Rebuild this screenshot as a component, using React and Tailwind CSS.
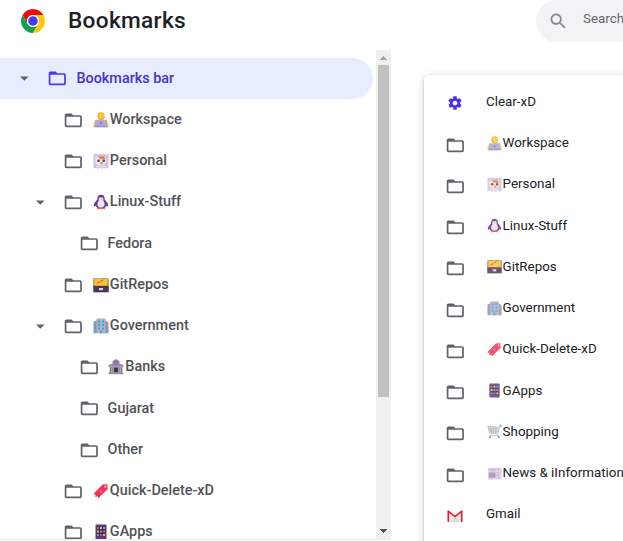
import React from 'react';

const FOLDER =
  'M20 6h-8l-2-2H4c-1.1 0-1.99.9-1.99 2L2 18c0 1.1.9 2 2 2h16c1.1 0 2-.9 2-2V8c0-1.1-.9-2-2-2zm0 12H4V8h16v10z';

function FolderIcon({ className = '' }) {
  return (
    <svg viewBox="0 0 24 24" className={`size-[20.6px] shrink-0 fill-current ${className}`}>
      <path d={FOLDER} />
    </svg>
  );
}

const EMOJI = {
  worker: (
    <>
      <path d="M.5 15v-2.500Q1 9 4 8.500h8q3 .5 3.500 4V15z" fill="#f8c63c" />
      <path d="M4.500 3Q5 .3 8 .3T11.600 3.500 10.500 7.300L10 9H6.300L6 7.500Q4.300 6 4.500 3z" fill="#f2b01b" />
      <path d="M5.500 2.500Q8 0 10.700 2.500L10 6 8 6.800 6.300 5.500z" fill="#ffca2b" />
      <path d="M2 7.800h12v6.700H2z" fill="#b7a5d8" />
      <path d="M1.500 13.700h13v1.600h-13z" fill="#9c8bbd" />
      <circle cx="8" cy="11" r=".9" fill="#7354aa" />
    </>
  ),
  owl: (
    <>
      <path d="M.5 1.500L3 .5l2 1.200L7 .5l2 1.200L11 .5l2 1.200 2.500-1v14L13 15.500l-2-.8-2 1-2-1-2 1-2-1-2.500.8z" fill="#cfc2e0" />
      <path d="M2.500 3.500L8 5l5-1.500.3 6L10 12.500H6L2.500 10z" fill="#efe5ec" />
      <path d="M5.500 3.200l5.500.3 1.800 2.500-3 .5-1.300-1L7 6.500z" fill="#f17d33" />
      <path d="M7.800 9l2.500.3L9 12 7.300 11z" fill="#f58b3c" />
      <circle cx="5.500" cy="7.800" r="1.300" fill="#604052" />
      <circle cx="10.800" cy="7.800" r="1.300" fill="#604052" />
      <path d="M3 12.500l1.500.8L6 12.500l2 1 2-1 1.500.8 1.500-.8v1.800H3z" fill="#e8e0f1" />
    </>
  ),
  penguin: (
    <>
      <path d="M8 .8C5.300.8 4.200 2.800 4.300 5.500L1.200 9.500c-1 2-.3 4.200 1.700 2.300.5 2 2 3 5.100 3s4.600-1 5.100-3c2 1.900 2.700-.3 1.700-2.300l-3.100-4C11.800 2.800 10.700.8 8 .8z" fill="#693a91" />
      <path d="M5.800 4Q7 2.500 8 3.800 9 2.500 10.300 4v2.700c2.700 3.500 1 6.800-2.300 6.800s-5-3.300-2.200-6.800z" fill="#eee6f2" />
      <path d="M7 4.700h2L8 6.200z" fill="#fb9e31" />
      <path d="M4.300 13.700H7v1.600H3.800zM9 13.700h2.700l.5 1.600H9z" fill="#f96e38" />
    </>
  ),
  box: (
    <>
      <path d="M.5 1.500h15V11H.5z" fill="#6b4a55" />
      <path d="M1.300 2h8l1-1h3l1.400 1.500V9.500H1.300z" fill="#ffc52a" />
      <path d="M9.500.8H13v1.500H9.500z" fill="#58c55c" />
      <path d="M4 6.200l3-1.200M7.500 4.200l2.500-1" stroke="#ed5940" strokeWidth="1.300" />
      <path d="M.3 8.800h15.400v6.500H.3z" fill="#4c345d" />
      <path d="M6 11h4v2.200H6z" fill="#dfd4ea" />
    </>
  ),
  office: (
    <>
      <path d="M1 3.500L4 2v13.300H.5V5zM12 2.500L15 4l.5 1.500v9.800H12z" fill="#9d91aa" />
      <path d="M3.500.5h9v14.800h-9z" fill="#b7acc0" />
      <path d="M5 2.500h2v2H5zM9 2.500h2v2H9zM5 6h2v2H5zM9 6h2v2H9zM5 9.500h2v2H5zM9 9.500h2v2H9zM7 12.500h2v2.800H7z" fill="#21aeea" />
      <path d="M1.300 5.500h1v8h-1zM13.500 5.500h1v8h-1z" fill="#64a6cb" />
    </>
  ),
  bank: (
    <>
      <path d="M8 0l3.500 2v2.500L15.500 6v2H.5V6l4-1.500V2z" fill="#9b8ba5" />
      <path d="M1.500 7.500h13v6h-13z" fill="#b9acc0" />
      <path d="M6 8.500h4v5H6z" fill="#40303f" />
      <path d="M2 8h1.200v5.500H2zM4.300 8h1v5.500h-1zM10.700 8h1v5.500h-1zM12.900 8h1.200v5.500h-1.200z" fill="#85758e" />
      <path d="M.8 13.200h14.400v2H.8z" fill="#9787a1" />
      <circle cx="8" cy="3.800" r="1.700" fill="#773fba" />
      <path d="M7.600 2.700h.8v2.300h-.8z" fill="#e0c2fa" />
    </>
  ),
  tag: (
    <>
      <path d="M9.500 1.500l4.500-.3.800 4.800-7.300 7-2 2.500-.9-2.300-2.300.8.200-2.300L.300 11z" fill="#f63156" />
      <path d="M8 6.900l1.500 1.500L8 9.900 6.500 8.400z" fill="#ff8298" />
      <circle cx="12.300" cy="3.700" r=".9" fill="#fff" />
      <path d="M12.300 3.700q0-3 3-3.200" fill="none" stroke="#dc9a69" strokeWidth=".8" />
    </>
  ),
  abacus: (
    <>
      <rect x="2.500" y=".5" width="11" height="15" rx="1" fill="#57398c" />
      <path d="M4 2.500h8v9.800H4z" fill="#3a2c5b" />
      <path d="M4 3h2v2H4zM10 6.500h2v2h-2zM7 10h2v2H7z" fill="#ed593d" />
      <path d="M7 3h2v2H7zM4 6.500h2v2H4zM10 10h2v2h-2z" fill="#f9b62f" />
      <path d="M10 3h2v2h-2zM7 6.500h2v2H7zM4 10h2v2H4z" fill="#4fa6e8" />
    </>
  ),
  cart: (
    <>
      <path d="M1 2.500l11.500 1L11 10H3z" fill="#e6e2e9" />
      <path d="M.7 2.500l11.800 1M1.500 5.200l10.500.3M2 7.700h9.500M4 3l.8 7M6.700 3l.3 7M9.500 3v7M1 2.500L3 10h8.500L13.700 1.500h1.500M11 10l1.300 2.300H3" fill="none" stroke="#b0aab6" strokeWidth=".9" />
      <path d="M13.300.8h2.300V3h-1.500z" fill="#68a9eb" />
      <circle cx="3" cy="14" r="1.200" fill="#4e9df2" />
      <circle cx="12.500" cy="14" r="1.200" fill="#4e9df2" />
    </>
  ),
  news: (
    <>
      <path d="M1 2h14.500v12.500H1z" fill="#d9cde6" />
      <path d="M2 3h8v2H2zM11 3h3.500v1H11z" fill="#bfb2cd" />
      <path d="M2 7h7v5.500H2z" fill="#9f91ac" />
      <path d="M10 7h4v1h-4zM10 9.300h4v1h-4zM10 11.600h4v1h-4z" fill="#bcb0c9" />
    </>
  ),
};

function Emoji({ name, className = '' }) {
  return (
    <svg viewBox="0 0 16 16" className={`shrink-0 ${className}`}>
      {EMOJI[name]}
    </svg>
  );
}

function Caret() {
  return (
    <svg viewBox="0 0 24 24" className="size-[20.6px] fill-[#5f6368]">
      <path d="M7 10l5 5 5-5z" />
    </svg>
  );
}

const TREE = [
  { label: 'Bookmarks bar', depth: 0, open: true },
  { label: 'Workspace', depth: 1, emoji: 'worker' },
  { label: 'Personal', depth: 1, emoji: 'owl' },
  { label: 'Linux-Stuff', depth: 1, emoji: 'penguin', open: true },
  { label: 'Fedora', depth: 2 },
  { label: 'GitRepos', depth: 1, emoji: 'box' },
  { label: 'Government', depth: 1, emoji: 'office', open: true },
  { label: 'Banks', depth: 2, emoji: 'bank' },
  { label: 'Gujarat', depth: 2 },
  { label: 'Other', depth: 2 },
  { label: 'Quick-Delete-xD', depth: 1, emoji: 'tag' },
  { label: 'GApps', depth: 1, emoji: 'abacus' },
];

const ITEMS = [
  { label: 'Clear-xD', icon: 'gear' },
  { label: 'Workspace', emoji: 'worker' },
  { label: 'Personal', emoji: 'owl' },
  { label: 'Linux-Stuff', emoji: 'penguin' },
  { label: 'GitRepos', emoji: 'box' },
  { label: 'Government', emoji: 'office' },
  { label: 'Quick-Delete-xD', emoji: 'tag' },
  { label: 'GApps', emoji: 'abacus' },
  { label: 'Shopping', emoji: 'cart' },
  { label: 'News & iInformation', emoji: 'news' },
  { label: 'Gmail', icon: 'gmail' },
];

const INDENT = ['pl-[14px]', 'pl-[29.7px]', 'pl-[45.2px]'];

function TreeRow({ label, depth, emoji, open }) {
  const active = depth === 0;
  return (
    <div
      className={`flex h-[41.25px] w-[373px] shrink-0 items-center ${INDENT[depth]} ${
        active ? 'rounded-r-full bg-[#e8ecff]' : ''
      }`}
    >
      <div className="w-[33.4px] shrink-0">{open && <Caret />}</div>
      <FolderIcon className={active ? 'text-[#4b38ee]' : 'text-[#5f6368]'} />
      <div
        className={`flex items-center whitespace-nowrap text-[14.42px] font-medium leading-5 ${
          emoji ? 'ml-[9px]' : 'ml-[8.4px]'
        } ${active ? 'text-[#4534c8]' : 'text-[#515256]'}`}
      >
        {emoji && <Emoji name={emoji} className="mr-[1.2px] size-4" />}
        <span>{label}</span>
      </div>
    </div>
  );
}

function Gear() {
  return (
    <svg viewBox="0 0 24 24" className="size-4 fill-[#4733ef]">
      <path d="M19.43 12.98c.04-.32.07-.64.07-.98s-.03-.66-.07-.98l2.11-1.65c.19-.15.24-.42.12-.64l-2-3.46c-.12-.22-.39-.3-.61-.22l-2.49 1c-.52-.4-1.08-.73-1.69-.98l-.38-2.65C14.46 2.18 14.25 2 14 2h-4c-.25 0-.46.18-.49.42l-.38 2.65c-.61.25-1.17.59-1.69.98l-2.49-1c-.23-.09-.49 0-.61.22l-2 3.46c-.13.22-.07.49.12.64l2.11 1.65c-.04.32-.07.65-.07.98s.03.66.07.98l-2.11 1.65c-.19.15-.24.42-.12.64l2 3.46c.12.22.39.3.61.22l2.49-1c.52.4 1.08.73 1.69.98l.38 2.65c.03.24.24.42.49.42h4c.25 0 .46-.18.49-.42l.38-2.65c.61-.25 1.17-.59 1.69-.98l2.49 1c.23.09.49 0 .61-.22l2-3.46c.12-.22.07-.49-.12-.64l-2.11-1.65zM12 15.500c-1.930 0-3.500-1.570-3.500-3.500s1.570-3.500 3.500-3.500 3.500 1.570 3.500 3.500-1.570 3.500-3.500 3.500z" />
    </svg>
  );
}

function Gmail() {
  return (
    <svg viewBox="0 0 16 16" className="size-4">
      <path d="M2 3.500l6 5 6-5V14H2z" fill="#ededed" />
      <path d="M3 14l5-5 5 5z" fill="#dadada" />
      <path d="M1.300 14V3.200L8 8.700l6.700-5.500V14" fill="none" stroke="#e5272b" strokeWidth="1.700" strokeLinejoin="round" />
    </svg>
  );
}

function ItemRow({ label, emoji, icon }) {
  return (
    <div className="flex h-[41.25px] shrink-0 items-center pl-[20.6px]">
      <div className={`flex w-[20.6px] shrink-0 justify-center ${icon ? 'pb-[1px]' : ''}`}>
        {icon === 'gear' && <Gear />}
        {icon === 'gmail' && <Gmail />}
        {!icon && <FolderIcon className="text-[#5f6368]" />}
      </div>
      <div className="ml-[20.8px] flex items-center whitespace-nowrap pb-[3.4px] text-[13.39px] leading-5 text-[#202124]">
        {emoji && <Emoji name={emoji} className="ml-[0.6px] mr-[1px] size-[15px] opacity-85" />}
        <span>{label}</span>
      </div>
    </div>
  );
}

function ChromeLogo() {
  return (
    <svg viewBox="0 0 48 48" className="size-6 shrink-0">
      <circle cx="24" cy="24" r="24" fill="#fff" />
      <path d="M3.220 12A24 24 0 0 1 44.780 12H24a12 12 0 0 0-10.390 18z" fill="#ed0b0b" />
      <path d="M3.220 12A24 24 0 0 0 24 48l10.390-18a12 12 0 0 1-20.780 0z" fill="#0da34b" />
      <path d="M44.780 12A24 24 0 0 1 24 48l10.390-18A12 12 0 0 0 24 12z" fill="#fccb05" />
      <circle cx="24" cy="24" r="12" fill="#fff" />
      <circle cx="24" cy="24" r="9.500" fill="#4638ef" />
    </svg>
  );
}

export default function App() {
  return (
    <div className="flex h-[541px] w-[623px] flex-col overflow-hidden bg-white font-[Roboto,sans-serif]">
      <header className="flex h-[50px] shrink-0 items-start">
        <div className="flex h-[42px] w-[536px] shrink-0 items-center pl-[21px]">
          <ChromeLogo />
          <h1 className="ml-[23px] text-[22.66px] font-medium leading-8 tracking-[0.3px] text-[#202124]">Bookmarks</h1>
        </div>
        <div className="flex h-[42px] w-[87px] shrink-0 items-center overflow-hidden rounded-l-full bg-[#f1f3f4] pl-[12px]">
          <svg viewBox="0 0 24 24" className="size-[20.6px] shrink-0 fill-[#85888b]">
            <path d="M15.500 14h-.79l-.28-.27C15.410 12.590 16 11.110 16 9.500 16 5.910 13.090 3 9.500 3S3 5.910 3 9.500 5.910 16 9.500 16c1.610 0 3.090-.59 4.230-1.570l.27.280v.79l5 4.990L20.490 19l-4.990-5zm-6 0C7.010 14 5 11.990 5 9.500S7.010 5 9.500 5 14 7.010 14 9.500 11.990 14 9.500 14z" />
          </svg>
          <span className="ml-[14.4px] whitespace-nowrap pb-[4px] text-[13.39px] text-[#66696d]">Search</span>
        </div>
      </header>

      <div className="flex min-h-0 flex-1">
        <aside className="flex h-[490px] w-[391px] shrink-0 border-b border-[#ececec]">
          <nav className="flex w-[376px] shrink-0 flex-col overflow-hidden pt-[8px]">
            {TREE.map((row) => (
              <TreeRow key={row.label} {...row} />
            ))}
          </nav>
          <div className="flex w-[15px] shrink-0 flex-col items-center bg-[#f0f0f0]">
            <svg viewBox="0 0 15 15" className="size-[15px] shrink-0 fill-[#a3a3a3]" shapeRendering="crispEdges">
              <path d="M4 10l3.500-4L11 10z" />
            </svg>
            <div className="h-[332px] w-[11px] bg-[#c1c1c1]" />
            <svg viewBox="0 0 15 15" className="mt-auto mb-px size-[15px] shrink-0 fill-[#505050]" shapeRendering="crispEdges">
              <path d="M4 6l3.500 4L11 6z" />
            </svg>
          </div>
        </aside>

        <main className="flex flex-1 flex-col overflow-hidden pl-[33px] pt-[25px]">
          <div className="flex h-[520px] w-[260px] shrink-0 flex-col rounded-[5px] bg-white pt-[8px] shadow-[0_1px_2px_rgba(60,64,67,0.3),0_2px_6px_2px_rgba(60,64,67,0.15)]">
            {ITEMS.map((item) => (
              <ItemRow key={item.label} {...item} />
            ))}
          </div>
        </main>
      </div>
    </div>
  );
}
